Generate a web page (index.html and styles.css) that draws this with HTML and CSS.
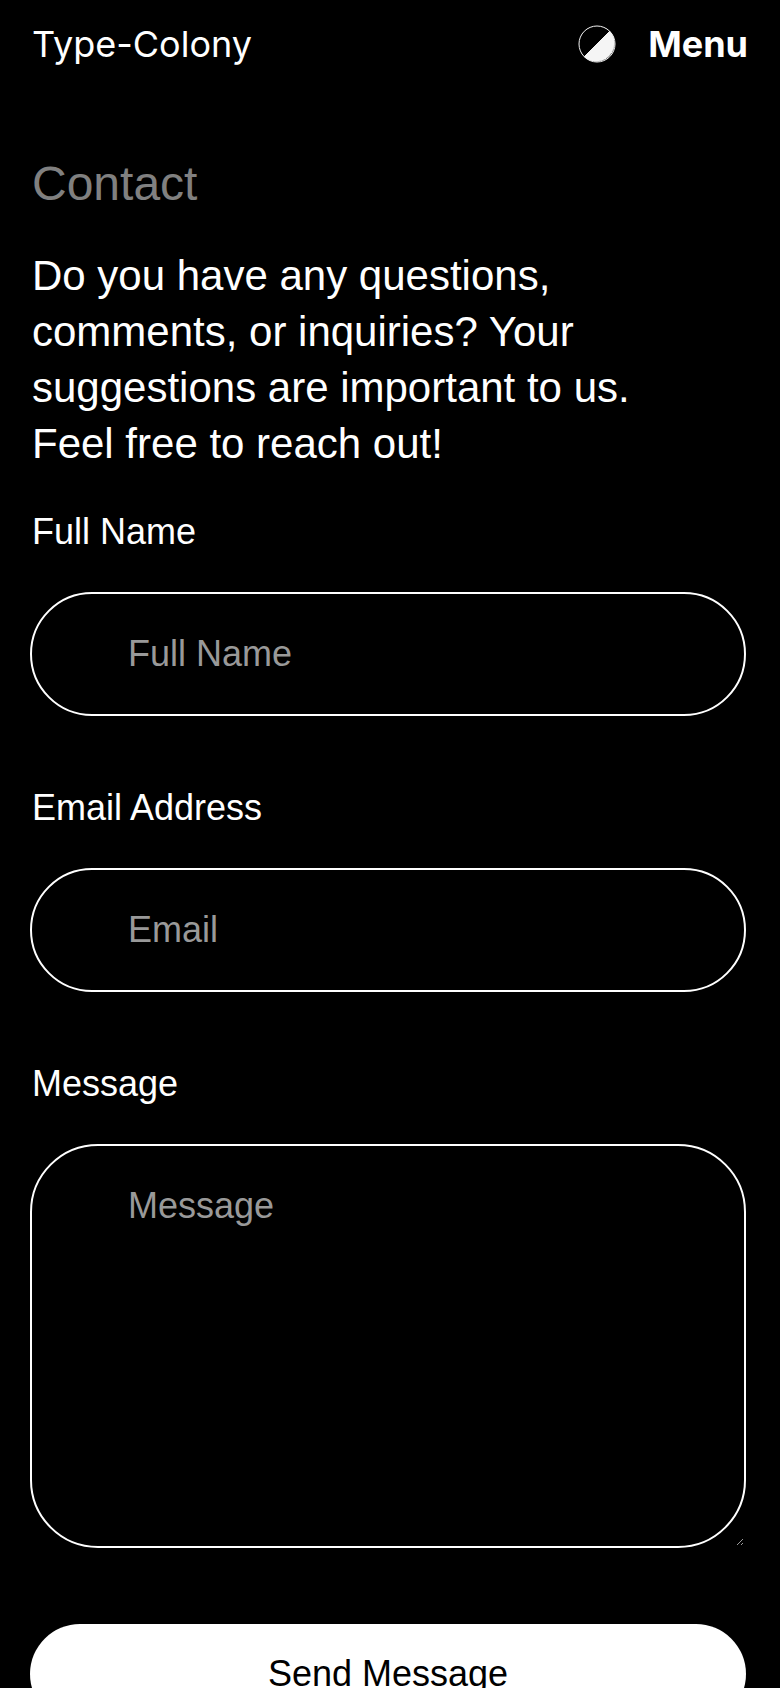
FILE: index.html
```html
<!DOCTYPE html>
<html lang="en">
<head>
  <meta charset="UTF-8">
  <meta name="viewport" content="width=device-width, initial-scale=1">
  <title>Contact - Type-Colony</title>
  <link rel="stylesheet" href="styles.css">
</head>
<body>

  <header class="header">
    <a class="logo" href="#">Type-Colony</a>
    <div class="header-actions">
      <button class="theme-toggle" type="button" aria-label="Toggle theme">
        <svg width="38" height="38" viewBox="0 0 38 38">
          <circle cx="19" cy="19" r="18" fill="none" stroke="#f5f5f5" stroke-width="1"/>
          <path d="M31.7 6.3A18 18 0 0 1 6.3 31.7Z" fill="#f5f5f5" stroke="#f5f5f5"/>
        </svg>
      </button>
      <button class="menu-button" type="button">Menu</button>
    </div>
  </header>

  <main class="contact">
    <h1>Contact</h1>
    <p class="intro">Do you have any questions, comments, or inquiries? Your suggestions are important to us. Feel free to reach out!</p>

    <form class="contact-form">
      <div class="field">
        <label for="name">Full Name</label>
        <input type="text" id="name" placeholder="Full Name">
      </div>
      <div class="field">
        <label for="email">Email Address</label>
        <input type="email" id="email" placeholder="Email">
      </div>
      <div class="field">
        <label for="message">Message</label>
        <textarea id="message" placeholder="Message"></textarea>
      </div>
      <button class="send-button" type="submit">Send Message</button>
    </form>
  </main>

</body>
</html>
```

FILE: styles.css
```css
* { box-sizing: border-box; }
html { background: #000; scrollbar-width: none; }
body { margin: 0; background: #000; color: #fff; font-family: "Liberation Sans", Arial, sans-serif; font-size: 36px; line-height: 44px; }
button, input, textarea { font: inherit; }
button { border: none; padding: 0; cursor: pointer; }

.header { display: flex; align-items: center; justify-content: space-between; padding: 22px 32px 0; font-family: Inter, sans-serif; }
.logo { color: #fff; text-decoration: none; }
.header-actions { display: flex; align-items: center; gap: 32px; }
.theme-toggle { display: flex; background: none; }
.menu-button { background: none; color: #fff; font-weight: bold; }

.contact { padding: 90px 34px 64px 30px; }
h1 { margin: 0 2px 36px; color: #808080; font-size: 48px; font-weight: normal; line-height: 56px; }
.intro { max-width: 640px; margin: 0 2px 38px; font-size: 42px; line-height: 56px; }

.contact-form { display: flex; flex-direction: column; gap: 70px; }
.field { display: flex; flex-direction: column; gap: 38px; }
label { padding-left: 2px; }
input, textarea { display: block; width: 100%; padding: 38px 96px; border: 2px solid #fff; background: #000; color: #fff; outline: none; }
input { height: 124px; border-radius: 62px; }
textarea { height: 404px; border-radius: 68px; resize: vertical; }
::placeholder { color: #999; opacity: 1; }
.send-button { height: 100px; margin-top: 6px; border-radius: 50px; background: #fff; color: #000; }
```
